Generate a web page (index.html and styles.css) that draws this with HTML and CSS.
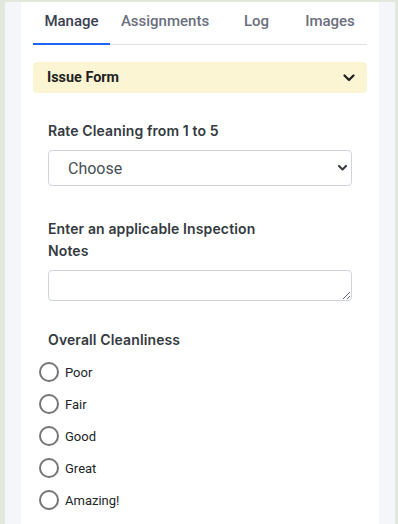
FILE: index.html
```html
<!DOCTYPE html>
<html>
<head>
<meta charset="utf-8">
<link rel="stylesheet" href="styles.css">
</head>
<body>
<div class="frame">
  <div class="card">
    <nav class="tabs">
      <div class="tab tab-manage active">Manage</div>
      <div class="tab tab-assign">Assignments</div>
      <div class="tab tab-log">Log</div>
      <div class="tab tab-images">Images</div>
    </nav>
    <div class="accordion">
      <span class="acc-title">Issue Form</span>
      <svg class="acc-chevron" width="12" height="8" viewBox="0 0 12 8"><path d="M1.5 1.5 L6 6 L10.5 1.5" fill="none" stroke="#1f1f1f" stroke-width="2.2" stroke-linecap="round" stroke-linejoin="round"/></svg>
    </div>
    <form class="form">
      <div class="group group-rate">
        <label class="label">Rate Cleaning from 1 to 5</label>
        <div class="select-wrap">
          <select class="select">
            <option>Choose</option>
          </select>
          <svg class="select-chevron" width="9" height="6" viewBox="0 0 9 6"><path d="M1 1 L4.5 4.5 L8 1" fill="none" stroke="#343a40" stroke-width="2" stroke-linecap="round" stroke-linejoin="round"/></svg>
        </div>
      </div>
      <div class="group group-notes">
        <label class="label label-narrow">Enter an applicable Inspection Notes</label>
        <textarea class="textarea"></textarea>
      </div>
      <div class="group group-radio">
        <label class="label">Overall Cleanliness</label>
        <div class="radios">
          <label class="radio"><input type="radio" name="c" class="radio-input"><span>Poor</span></label>
          <label class="radio"><input type="radio" name="c" class="radio-input"><span>Fair</span></label>
          <label class="radio"><input type="radio" name="c" class="radio-input"><span>Good</span></label>
          <label class="radio"><input type="radio" name="c" class="radio-input"><span>Great</span></label>
          <label class="radio"><input type="radio" name="c" class="radio-input"><span>Amazing!</span></label>
        </div>
      </div>
    </form>
  </div>
</div>
</body>
</html>
```

FILE: styles.css
```css
html, body {
  margin: 0;
  padding: 0;
  background: #e2e8dc;
  height: 100%;
  overflow: hidden;
}
.frame {
  margin: 2px 0 0 5px;
  width: 358px;
  padding: 0 16px;
  background: #f5f6fa;
  min-height: 540px;
}
.card {
  background: #ffffff;
  padding: 0 12px;
  min-height: 540px;
}
.tabs {
  display: flex;
  border-bottom: 1px solid #dfe1e6;
  font-family: Roboto, "Liberation Sans", sans-serif;
  font-size: 15px;
  font-weight: 500;
}
.tab {
  padding: 9px 0 12px;
  line-height: 20px;
  text-align: center;
  color: #6b6f7e;
  border-bottom: 2px solid transparent;
  margin-bottom: -1px;
}
.tab.active {
  color: #3b4052;
  border-bottom-color: #1f66f2;
}
.tab-manage { width: 77px; }
.tab-assign { width: 110px; }
.tab-log { width: 73px; }
.tab-images { width: 74px; }
.accordion {
  margin-top: 17px;
  height: 31px;
  background: #fcf5d4;
  border-radius: 4px;
  display: flex;
  align-items: center;
  justify-content: space-between;
  padding: 0 12px 0 14px;
}
.acc-title {
  font-family: Roboto, "Liberation Sans", sans-serif;
  font-weight: 700;
  font-size: 14.4px;
  color: #1f1f1f;
}
.form {
  padding: 0 15px;
}
.group {
  display: flex;
  flex-direction: column;
}
.group-rate { margin-top: 27px; }
.group-notes { margin-top: 32px; }
.group-radio { margin-top: 28px; }
.label {
  font-family: Inter, "Liberation Sans", sans-serif;
  font-weight: 600;
  font-size: 14px;
  letter-spacing: 0.12px;
  line-height: 22px;
  color: #343a40;
}
.label-narrow {
  width: 230px;
}
.select-wrap {
  position: relative;
  margin-top: 8px;
}
.select {
  appearance: none;
  -webkit-appearance: none;
  width: 100%;
  height: 36px;
  box-sizing: border-box;
  border: 1px solid #ced4da;
  border-radius: 4px;
  background: #fff;
  padding: 0 0 0 19px;
  font-family: Roboto, "Liberation Sans", sans-serif;
  font-size: 16px;
  color: #495057;
}
.select-chevron {
  position: absolute;
  right: 5px;
  top: 15px;
}
.textarea {
  margin-top: 8px;
  width: 100%;
  height: 31px;
  box-sizing: border-box;
  border: 1px solid #ced4da;
  border-radius: 4px;
  display: block;
}
.radios {
  margin: 5px 0 0 -9px;
  display: flex;
  flex-direction: column;
}
.radio {
  height: 32px;
  display: flex;
  align-items: center;
  gap: 6px;
  font-family: Roboto, "Liberation Sans", sans-serif;
  font-size: 13px;
  color: #212529;
}
.radio-input {
  appearance: none;
  -webkit-appearance: none;
  margin: 0;
  width: 20px;
  height: 20px;
  box-sizing: border-box;
  border: 2px solid #767676;
  border-radius: 50%;
  background: #fff;
}
```
